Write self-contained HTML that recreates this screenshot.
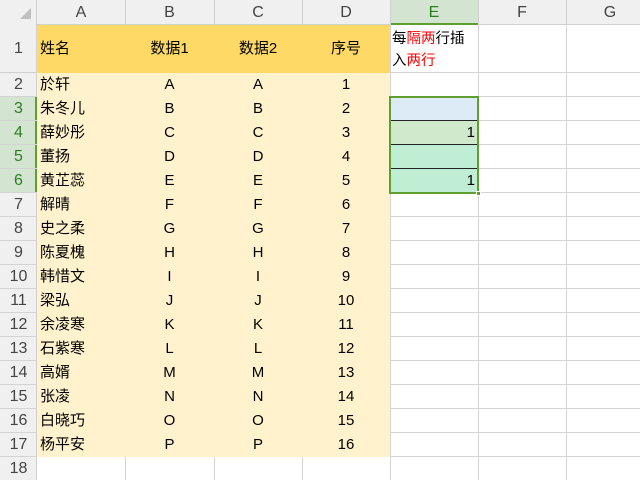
<!DOCTYPE html>
<html><head><meta charset="utf-8"><style>
*{margin:0;padding:0;box-sizing:border-box}
body{width:640px;height:480px;overflow:hidden;background:#fff;position:relative;font-family:"Liberation Sans","Noto Sans CJK SC",sans-serif;font-size:15px;color:#000}
.a{position:absolute}
.vl{position:absolute;top:25px;height:455px;width:1px;background:#d4d4d4}
.hl{position:absolute;left:0;width:640px;height:1px;background:#d4d4d4}
.r{position:absolute;left:0;width:640px;height:24px;line-height:24px}
.r span{position:absolute;top:0}
.h{left:0;width:37px;text-align:center;color:#444;font-size:16px}
.n{left:40px}
.b{left:125px;width:89px;text-align:center}
.c{left:214px;width:88px;text-align:center}
.d{left:302px;width:88px;text-align:center}
.e{left:390px;width:85px;text-align:right}
.ch{position:absolute;top:0;height:25px;line-height:26px;text-align:center;color:#444;font-size:16px}
</style></head><body>
<!-- header bg -->
<div class="a" style="left:0;top:0;width:640px;height:25px;background:#f0f0f0;border-bottom:1px solid #d0d0d0"></div>
<div class="a" style="left:0;top:0;width:37px;height:480px;background:#f0f0f0;border-right:1px solid #d0d0d0"></div>
<div class="a" style="left:390px;top:0;width:88px;height:25px;background:#d3e5d0;border-bottom:2px solid #5ea030"></div>
<div class="a" style="left:0;top:97px;width:37px;height:96px;background:#d3e5d0;border-right:2px solid #5ea030"></div>
<!-- triangle -->
<svg class="a" style="left:20px;top:8px" width="12" height="12"><polygon points="11,0 11,11 0,11" fill="#c0c0c0"/></svg>
<!-- header separators -->
<div class="a" style="left:125px;top:0;width:1px;height:25px;background:#d0d0d0"></div>
<div class="a" style="left:214px;top:0;width:1px;height:25px;background:#d0d0d0"></div>
<div class="a" style="left:302px;top:0;width:1px;height:25px;background:#d0d0d0"></div>
<div class="a" style="left:390px;top:0;width:1px;height:25px;background:#d0d0d0"></div>
<div class="a" style="left:478px;top:0;width:1px;height:25px;background:#d0d0d0"></div>
<div class="a" style="left:566px;top:0;width:1px;height:25px;background:#d0d0d0"></div>
<div class="ch" style="left:37px;width:88px">A</div>
<div class="ch" style="left:125px;width:89px">B</div>
<div class="ch" style="left:214px;width:88px">C</div>
<div class="ch" style="left:302px;width:88px">D</div>
<div class="ch" style="left:390px;width:88px;color:#2e7d22">E</div>
<div class="ch" style="left:478px;width:88px">F</div>
<div class="ch" style="left:566px;width:88px">G</div>
<!-- gridlines -->
<div class="vl" style="left:125px"></div><div class="vl" style="left:214px"></div><div class="vl" style="left:302px"></div><div class="vl" style="left:390px"></div><div class="vl" style="left:478px"></div><div class="vl" style="left:566px"></div>
<div class="hl" style="top:72px"></div><div class="hl" style="top:96px"></div><div class="hl" style="top:120px"></div><div class="hl" style="top:144px"></div><div class="hl" style="top:168px"></div><div class="hl" style="top:192px"></div><div class="hl" style="top:216px"></div><div class="hl" style="top:240px"></div><div class="hl" style="top:264px"></div><div class="hl" style="top:288px"></div><div class="hl" style="top:312px"></div><div class="hl" style="top:336px"></div><div class="hl" style="top:360px"></div><div class="hl" style="top:384px"></div><div class="hl" style="top:408px"></div><div class="hl" style="top:432px"></div><div class="hl" style="top:456px"></div>
<!-- fills -->
<div class="a" style="left:37px;top:25px;width:353px;height:48px;background:#ffd966"></div>
<div class="a" style="left:37px;top:73px;width:353px;height:384px;background:#fff2cc"></div>
<div class="a" style="left:390px;top:97px;width:88px;height:24px;background:#ddebf7"></div>
<div class="a" style="left:390px;top:121px;width:88px;height:24px;background:#d0e8cc"></div>
<div class="a" style="left:390px;top:145px;width:88px;height:48px;background:#c0eed5"></div>
<div class="a" style="left:390px;top:120px;width:88px;height:1px;background:#222"></div>
<div class="a" style="left:390px;top:144px;width:88px;height:1px;background:#222"></div>
<div class="a" style="left:390px;top:168px;width:88px;height:1px;background:#222"></div>
<div class="a" style="left:389px;top:96px;width:90px;height:98px;border:2px solid #5ea030"></div>
<div class="a" style="left:476px;top:191px;width:5px;height:5px;background:#5ea030;border:1px solid #fff"></div>
<!-- row 1 -->
<div class="a" style="left:0;top:25px;width:37px;height:48px;line-height:48px;text-align:center;color:#444;font-size:16px">1</div>
<div class="a" style="left:40px;top:25px;height:48px;line-height:48px">姓名</div>
<div class="a" style="left:125px;top:25px;width:89px;height:48px;line-height:48px;text-align:center">数据1</div>
<div class="a" style="left:214px;top:25px;width:88px;height:48px;line-height:48px;text-align:center">数据2</div>
<div class="a" style="left:302px;top:25px;width:88px;height:48px;line-height:48px;text-align:center">序号</div>
<div class="a" style="left:392px;top:28px;width:86px;line-height:22px;font-size:14.5px">每<span style="color:#f00">隔两</span>行插<br>入<span style="color:#f00">两行</span></div>
<!-- rows -->
<div class="r" style="top:73px"><span class="h">2</span><span class="n">於轩</span><span class="b">A</span><span class="c">A</span><span class="d">1</span></div>
<div class="r" style="top:97px"><span class="h" style="color:#2e7d22">3</span><span class="n">朱冬儿</span><span class="b">B</span><span class="c">B</span><span class="d">2</span></div>
<div class="r" style="top:121px"><span class="h" style="color:#2e7d22">4</span><span class="n">薛妙彤</span><span class="b">C</span><span class="c">C</span><span class="d">3</span><span class="e">1</span></div>
<div class="r" style="top:145px"><span class="h" style="color:#2e7d22">5</span><span class="n">董扬</span><span class="b">D</span><span class="c">D</span><span class="d">4</span></div>
<div class="r" style="top:169px"><span class="h" style="color:#2e7d22">6</span><span class="n">黄芷蕊</span><span class="b">E</span><span class="c">E</span><span class="d">5</span><span class="e">1</span></div>
<div class="r" style="top:193px"><span class="h">7</span><span class="n">解晴</span><span class="b">F</span><span class="c">F</span><span class="d">6</span></div>
<div class="r" style="top:217px"><span class="h">8</span><span class="n">史之柔</span><span class="b">G</span><span class="c">G</span><span class="d">7</span></div>
<div class="r" style="top:241px"><span class="h">9</span><span class="n">陈夏槐</span><span class="b">H</span><span class="c">H</span><span class="d">8</span></div>
<div class="r" style="top:265px"><span class="h">10</span><span class="n">韩惜文</span><span class="b">I</span><span class="c">I</span><span class="d">9</span></div>
<div class="r" style="top:289px"><span class="h">11</span><span class="n">梁弘</span><span class="b">J</span><span class="c">J</span><span class="d">10</span></div>
<div class="r" style="top:313px"><span class="h">12</span><span class="n">余凌寒</span><span class="b">K</span><span class="c">K</span><span class="d">11</span></div>
<div class="r" style="top:337px"><span class="h">13</span><span class="n">石紫寒</span><span class="b">L</span><span class="c">L</span><span class="d">12</span></div>
<div class="r" style="top:361px"><span class="h">14</span><span class="n">高婿</span><span class="b">M</span><span class="c">M</span><span class="d">13</span></div>
<div class="r" style="top:385px"><span class="h">15</span><span class="n">张凌</span><span class="b">N</span><span class="c">N</span><span class="d">14</span></div>
<div class="r" style="top:409px"><span class="h">16</span><span class="n">白晓巧</span><span class="b">O</span><span class="c">O</span><span class="d">15</span></div>
<div class="r" style="top:433px"><span class="h">17</span><span class="n">杨平安</span><span class="b">P</span><span class="c">P</span><span class="d">16</span></div>
<div class="r" style="top:457px"><span class="h">18</span></div>
<!-- row header separators -->
<div class="a" style="left:0;top:72px;width:37px;height:1px;background:#d0d0d0"></div>
</body></html>
